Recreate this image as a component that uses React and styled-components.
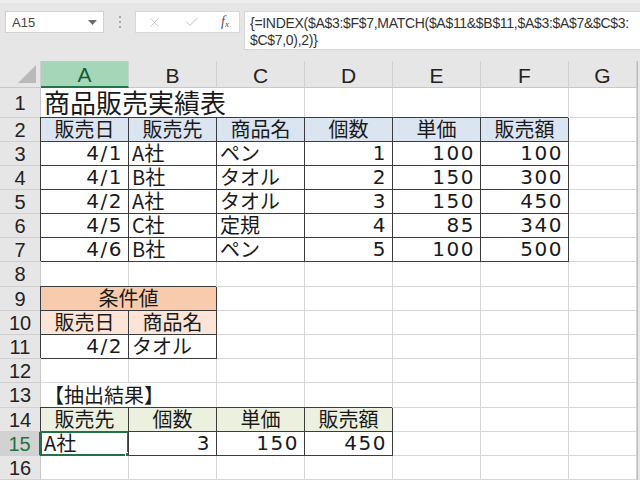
import React from "react"
import styled, { createGlobalStyle } from "styled-components"
import { X, Check } from "lucide-react"

const GlobalStyle = createGlobalStyle`
  html, body {
    margin: 0;
    padding: 0;
    background: #e6e6e6;
    overflow: hidden;
  }
`

const COLS = ["A", "B", "C", "D", "E", "F", "G"]
const ROW_HEIGHTS = [30, 24, 24, 24, 24, 24, 24, 25, 24, 24, 24, 24, 25, 24, 24, 24]

const BLUE = "#dbe5f1"
const ORANGE = "#f8cbad"
const PEACH = "#fce4d6"
const OLIVE = "#ebf1de"

const head = (t, fill) => ({ t, align: "center", fill, box: true })
const txt = t => ({ t, align: "left", box: true })
const num = t => ({ t, align: "right", box: true, num: true })

const SHEET = {
  1: [{ t: "商品販売実績表", span: 3, title: true }],
  2: ["販売日", "販売先", "商品名", "個数", "単価", "販売額"].map(t => head(t, BLUE)),
  3: [num("4/1"), txt("A社"), txt("ペン"), num("1"), num("100"), num("100")],
  4: [num("4/1"), txt("B社"), txt("タオル"), num("2"), num("150"), num("300")],
  5: [num("4/2"), txt("A社"), txt("タオル"), num("3"), num("150"), num("450")],
  6: [num("4/5"), txt("C社"), txt("定規"), num("4"), num("85"), num("340")],
  7: [num("4/6"), txt("B社"), txt("ペン"), num("5"), num("100"), num("500")],
  9: [{ ...head("条件値", ORANGE), span: 2 }],
  10: [head("販売日", PEACH), head("商品名", PEACH)],
  11: [num("4/2"), txt("タオル")],
  13: [{ t: "【抽出結果】", span: 2 }],
  14: ["販売先", "個数", "単価", "販売額"].map(t => head(t, OLIVE)),
  15: [{ ...txt("A社"), selected: true }, num("3"), num("150"), num("450")],
}

const App = () => {
  const rows = ROW_HEIGHTS.map((h, i) => {
    const n = i + 1
    const specs = SHEET[n] || []
    const cells = []
    let col = 0
    specs.forEach(s => {
      cells.push({ ...s, key: `${n}-${col}` })
      col += s.span || 1
    })
    while (col < COLS.length) {
      cells.push({ key: `${n}-${col}` })
      col += 1
    }
    return { n, h, cells }
  })

  return (
    <Window>
      <GlobalStyle />
      <FormulaBar>
        <NameBox>
          <span>A15</span>
          <svg width="9" height="5" viewBox="0 0 9 5">
            <path d="M0 0h9L4.5 5z" fill="#6a6a6a" />
          </svg>
        </NameBox>
        <Grip>
          <i />
          <i />
          <i />
        </Grip>
        <ButtonBox>
          <X size={15} strokeWidth={1.4} color="#c0c0c0" />
          <Check size={16} strokeWidth={1.4} color="#c0c0c0" />
          <Fx>
            f<sub>x</sub>
          </Fx>
        </ButtonBox>
        <FormulaInput>
          {"{=INDEX($A$3:$F$7,MATCH($A$11&$B$11,$A$3:$A$7&$C$3:"}
          <br />
          {"$C$7,0),2)}"}
        </FormulaInput>
      </FormulaBar>

      <Sheet $rows={ROW_HEIGHTS}>
        <Corner>
          <svg width="18" height="18" viewBox="0 0 18 18">
            <path d="M18 0v18H0z" fill="#b9b9b9" />
          </svg>
        </Corner>
        {COLS.map((c, i) => (
          <ColHeader key={c} $selected={i === 0}>
            {c}
          </ColHeader>
        ))}
        <Edge />
        {rows.map(r => (
          <React.Fragment key={r.n}>
            <RowHeader $selected={r.n === 15}>{r.n}</RowHeader>
            {r.cells.map(c => (
              <Cell
                key={c.key}
                $span={c.span}
                $align={c.align}
                $fill={c.fill}
                $box={c.box}
                $num={c.num}
                $title={c.title}
              >
                {c.t}
                {c.selected && (
                  <Selection>
                    <Handle />
                  </Selection>
                )}
              </Cell>
            ))}
            <Edge />
          </React.Fragment>
        ))}
      </Sheet>
    </Window>
  )
}

export default App

const Window = styled.div`
  width: 640px;
  height: 480px;
  display: flex;
  flex-direction: column;
  background: #e6e6e6;
  overflow: hidden;
`

const FormulaBar = styled.div`
  height: 61px;
  flex-shrink: 0;
  display: flex;
  align-items: flex-start;
  padding: 8px 0 0 5px;
  box-sizing: border-box;
  border-top: 3px solid #eeeeee;
`

const NameBox = styled.div`
  width: 99px;
  height: 22px;
  box-sizing: border-box;
  background: #fff;
  border: 1px solid #d0d0d0;
  display: flex;
  align-items: center;
  justify-content: space-between;
  padding: 0 6px 0 6px;
  font-family: "Liberation Sans", Arial, sans-serif;
  font-size: 13px;
  color: #444;
`

const Grip = styled.div`
  width: 31px;
  height: 22px;
  display: flex;
  flex-direction: column;
  align-items: center;
  justify-content: center;
  gap: 3px;

  i {
    width: 2px;
    height: 2px;
    background: #a8a8a8;
  }
`

const ButtonBox = styled.div`
  width: 105px;
  height: 22px;
  box-sizing: border-box;
  background: #fff;
  border: 1px solid #d6d6d6;
  display: flex;
  align-items: center;
  justify-content: space-between;
  padding: 0 10px 0 11px;
`

const Fx = styled.span`
  font-family: "Liberation Serif", "Times New Roman", serif;
  font-style: italic;
  font-size: 14px;
  color: #555;

  sub {
    font-size: 9px;
    vertical-align: -1px;
  }
`

const FormulaInput = styled.div`
  flex: 1;
  margin-left: 4px;
  height: 39px;
  box-sizing: border-box;
  background: #fff;
  border: 1px solid #d6d6d6;
  border-right: none;
  padding: 3px 0 0 5px;
  font-family: "Liberation Sans", Arial, sans-serif;
  font-size: 14px;
  line-height: 17px;
  letter-spacing: -0.3px;
  color: #333;
  white-space: nowrap;
  overflow: hidden;
`

const Sheet = styled.div`
  flex: 1;
  display: grid;
  grid-template-columns: 41px repeat(6, 88px) 68px 3px;
  grid-template-rows: 27px ${p => p.$rows.map(h => `${h}px`).join(" ")};
  background: #fff;
`

const Corner = styled.div`
  background: #e6e6e6;
  border-right: 1px solid #d0d0d0;
  border-bottom: 1px solid #c8c8c8;
  display: flex;
  align-items: flex-end;
  justify-content: flex-end;
  padding: 0 4px 4px 0;
`

const ColHeader = styled.div`
  background: ${p => (p.$selected ? "#a3d7b8" : "#e6e6e6")};
  border-right: 1px solid #cfcfcf;
  border-bottom: ${p => (p.$selected ? "2px solid #217346" : "1px solid #c8c8c8")};
  display: flex;
  align-items: center;
  justify-content: center;
  padding-top: 3px;
  font-family: "Liberation Sans", Arial, sans-serif;
  font-size: 21px;
  color: ${p => (p.$selected ? "#185a34" : "#222")};
`

const RowHeader = styled.div`
  background: ${p => (p.$selected ? "#d2d2d2" : "#e6e6e6")};
  border-right: ${p => (p.$selected ? "2px solid #217346" : "1px solid #c8c8c8")};
  border-bottom: 1px solid #d0d0d0;
  display: flex;
  align-items: center;
  justify-content: center;
  padding-top: 1px;
  font-family: "Liberation Sans", Arial, sans-serif;
  font-size: 20px;
  color: ${p => (p.$selected ? "#217346" : "#222")};
`

const Edge = styled.div`
  background: #e6e6e6;
  border-left: 1px solid #bdbdbd;
`

const Cell = styled.div`
  position: relative;
  grid-column: span ${p => p.$span || 1};
  background: ${p => p.$fill || "#fff"};
  border-right: 1px solid ${p => (p.$box ? "#3c3c3c" : "#d6d6d6")};
  border-bottom: 1px solid ${p => (p.$box ? "#3c3c3c" : "#d6d6d6")};
  box-shadow: ${p => (p.$box ? "-1px -1px 0 #3c3c3c" : "none")};
  display: flex;
  align-items: flex-end;
  justify-content: ${p =>
    p.$align === "center" ? "center" : p.$align === "right" ? "flex-end" : "flex-start"};
  padding: 0 ${p => (p.$num ? "5px" : "3px")} 0 3px;
  font-family: ${p =>
    p.$num
      ? `"DejaVu Sans", "Noto Sans CJK JP", sans-serif`
      : `"Noto Sans CJK JP", sans-serif`};
  font-size: ${p => (p.$title ? "26px" : "20px")};
  line-height: ${p => (p.$title ? "30px" : "24px")};
  letter-spacing: ${p => (p.$num ? "1.5px" : "0")};
  color: #1a1a1a;
  white-space: nowrap;
  overflow: visible;
`

const Selection = styled.div`
  position: absolute;
  left: -1px;
  top: -1px;
  right: -1px;
  bottom: -1px;
  border: 2px solid #217346;
  pointer-events: none;
`

const Handle = styled.div`
  position: absolute;
  right: -5px;
  bottom: -5px;
  width: 5px;
  height: 5px;
  background: #217346;
  border: 1px solid #fff;
`
